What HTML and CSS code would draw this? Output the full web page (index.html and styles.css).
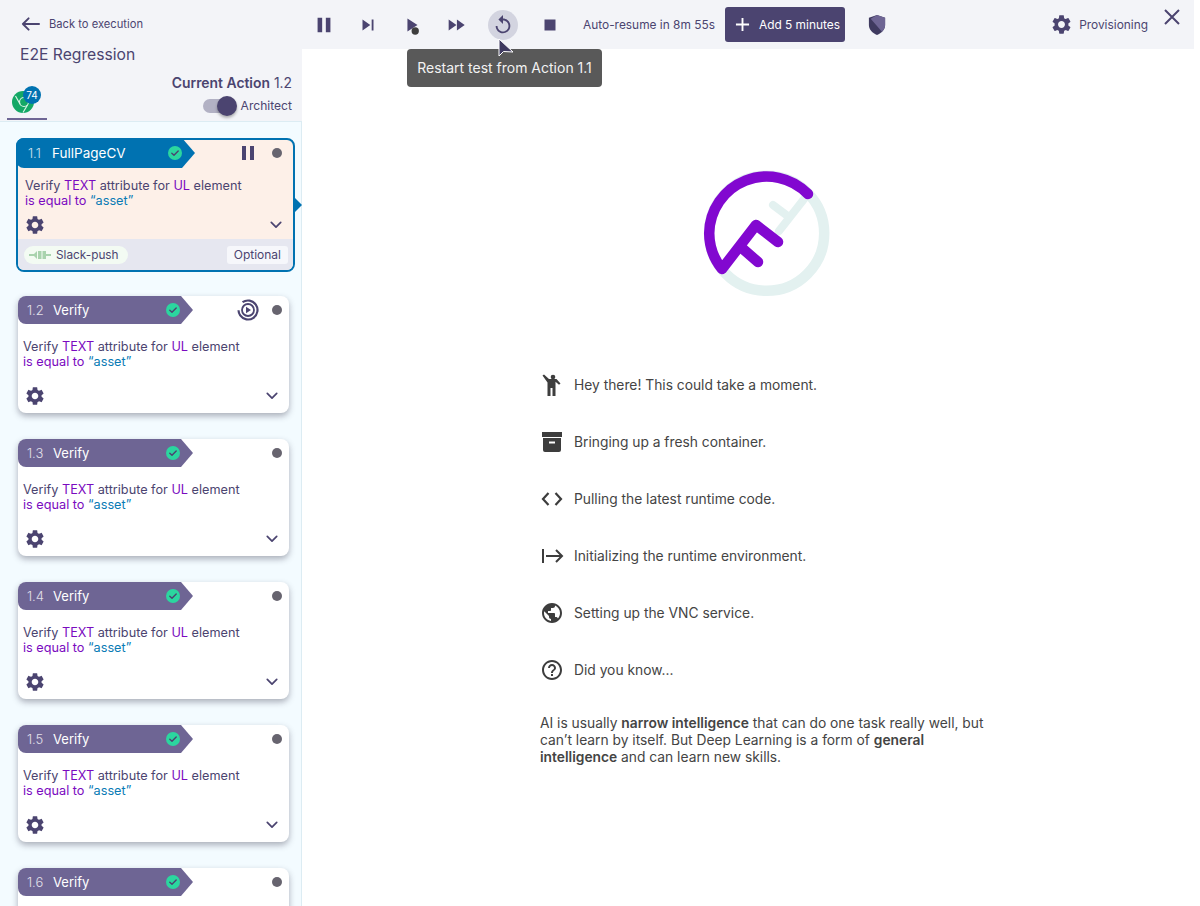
FILE: index.html
```html
<!DOCTYPE html>
<html lang="en">
  <head>
    <meta charset="UTF-8" />
    <meta name="viewport" content="width=device-width, initial-scale=1.0" />
    <title>E2E Regression</title>
    <link rel="stylesheet" href="styles.css">
  </head>
  <body>
    <svg class="sprite" aria-hidden="true">
      <symbol id="gear" viewBox="0 0 24 24"><path d="M19.14 12.94c.04-.3.06-.61.06-.94 0-.32-.02-.64-.07-.94l2.03-1.58c.18-.14.23-.41.12-.61l-1.92-3.32c-.12-.22-.37-.29-.59-.22l-2.39.96c-.5-.38-1.03-.7-1.62-.94l-.36-2.54c-.04-.24-.24-.41-.48-.41h-3.84c-.24 0-.43.17-.47.41l-.36 2.54c-.59.24-1.13.57-1.62.94l-2.39-.96c-.22-.08-.47 0-.59.22L2.74 8.87c-.12.21-.08.47.12.61l2.03 1.58c-.05.3-.09.63-.09.94s.02.64.07.94l-2.03 1.58c-.18.14-.23.41-.12.61l1.92 3.32c.12.22.37.29.59.22l2.39-.96c.5.38 1.03.7 1.62.94l.36 2.54c.05.24.24.41.48.41h3.84c.24 0 .44-.17.47-.41l.36-2.54c.59-.24 1.13-.56 1.62-.94l2.39.96c.22.08.47 0 .59-.22l1.92-3.32c.12-.22.07-.47-.12-.61l-2.01-1.58zM12 15.6c-1.98 0-3.6-1.62-3.6-3.6s1.62-3.6 3.6-3.6 3.6 1.62 3.6 3.6-1.62 3.6-3.6 3.6z"/></symbol>
      <symbol id="chevron" viewBox="0 0 14 9"><path d="M1.5 1.5 7 7l5.5-5.5" fill="none" stroke="currentColor" stroke-width="2" stroke-linecap="round" stroke-linejoin="round"/></symbol>
      <symbol id="check" viewBox="0 0 14 14"><circle cx="7" cy="7" r="7" fill="#2bd69f"/><path d="M3.8 7.2 6 9.3l4.2-4.4" fill="none" stroke="#4b4470" stroke-width="1.4" stroke-linecap="round" stroke-linejoin="round"/></symbol>
    </svg>

    <div class="app">
      <aside class="sidebar">
        <div class="side-head">
          <a class="back">
            <svg class="back-arrow" viewBox="0 0 20 14"><path d="M19 7H2M8 1 2 7l6 6" fill="none" stroke="currentColor" stroke-width="2" stroke-linecap="round" stroke-linejoin="round"/></svg>
            Back to execution
          </a>
          <div class="suite-name">E2E Regression</div>
          <div class="side-tools">
            <div class="browser-tab">
              <svg class="chrome" viewBox="0 0 22 22">
                <circle cx="11" cy="11" r="11" fill="#14a866"/>
                <circle cx="12" cy="11" r="4.5" fill="none" stroke="#d6f2e4" stroke-width="1.2"/>
                <path d="M12 6.5h9M8 13 3.5 5M15.5 14 11 21.5" stroke="#d6f2e4" stroke-width="1.2" fill="none"/>
              </svg>
              <span class="count">74</span>
            </div>
            <div class="current">
              <div class="current-label"><b>Current Action</b> 1.2</div>
              <div class="mode">
                <span class="toggle"><span class="knob"></span></span>
                Architect
              </div>
            </div>
          </div>
        </div>

        <div class="action-list">
          <div class="card card-active">
            <div class="card-top">
              <div class="ribbon"><span class="num">1.1</span><span class="name">FullPageCV</span><svg class="check"><use href="#check"/></svg></div>
              <svg class="state-pause" viewBox="0 0 12 14"><path d="M0 0h4v14H0zM8 0h4v14H8z"/></svg>
              <span class="dot"></span>
            </div>
            <div class="card-text">Verify <em>TEXT</em> attribute for <em>UL</em> element<br><em>is equal to</em> <i>“asset”</i></div>
            <div class="card-foot">
              <svg class="gear"><use href="#gear"/></svg>
              <svg class="chev"><use href="#chevron"/></svg>
            </div>
            <div class="card-extra">
              <span class="plugin">
                <svg viewBox="0 0 22 8"><path d="M0 4h5M17 4h5" stroke="#a9d3ae" stroke-width="2"/><path d="M4 4l4-4v8zM9 0h3.500v8H9zM13.500 0H17v8h-3.500z" fill="#a9d3ae"/></svg>
                Slack-push
              </span>
              <span class="optional">Optional</span>
            </div>
            <span class="pointer"></span>
          </div>

          <div class="card">
            <div class="card-top">
              <div class="ribbon"><span class="num">1.2</span><span class="name">Verify</span><svg class="check"><use href="#check"/></svg></div>
              <svg class="state-run" viewBox="0 0 22 22">
                <circle cx="11" cy="11" r="9.500" fill="none" stroke="#4b4470" stroke-width="2.200" stroke-dasharray="50 10" transform="rotate(-125 11 11)"/>
                <circle cx="11" cy="11" r="6" fill="none" stroke="#4b4470" stroke-width="1.800"/>
                <path d="M9 7.800v6.400l5-3.200z" fill="#4b4470"/>
              </svg>
              <span class="dot"></span>
            </div>
            <div class="card-text">Verify <em>TEXT</em> attribute for <em>UL</em> element<br><em>is equal to</em> <i>“asset”</i></div>
            <div class="card-foot">
              <svg class="gear"><use href="#gear"/></svg>
              <svg class="chev"><use href="#chevron"/></svg>
            </div>
          </div>

          <div class="card">
            <div class="card-top">
              <div class="ribbon"><span class="num">1.3</span><span class="name">Verify</span><svg class="check"><use href="#check"/></svg></div>
              <span class="dot"></span>
            </div>
            <div class="card-text">Verify <em>TEXT</em> attribute for <em>UL</em> element<br><em>is equal to</em> <i>“asset”</i></div>
            <div class="card-foot">
              <svg class="gear"><use href="#gear"/></svg>
              <svg class="chev"><use href="#chevron"/></svg>
            </div>
          </div>

          <div class="card">
            <div class="card-top">
              <div class="ribbon"><span class="num">1.4</span><span class="name">Verify</span><svg class="check"><use href="#check"/></svg></div>
              <span class="dot"></span>
            </div>
            <div class="card-text">Verify <em>TEXT</em> attribute for <em>UL</em> element<br><em>is equal to</em> <i>“asset”</i></div>
            <div class="card-foot">
              <svg class="gear"><use href="#gear"/></svg>
              <svg class="chev"><use href="#chevron"/></svg>
            </div>
          </div>

          <div class="card">
            <div class="card-top">
              <div class="ribbon"><span class="num">1.5</span><span class="name">Verify</span><svg class="check"><use href="#check"/></svg></div>
              <span class="dot"></span>
            </div>
            <div class="card-text">Verify <em>TEXT</em> attribute for <em>UL</em> element<br><em>is equal to</em> <i>“asset”</i></div>
            <div class="card-foot">
              <svg class="gear"><use href="#gear"/></svg>
              <svg class="chev"><use href="#chevron"/></svg>
            </div>
          </div>

          <div class="card">
            <div class="card-top">
              <div class="ribbon"><span class="num">1.6</span><span class="name">Verify</span><svg class="check"><use href="#check"/></svg></div>
              <span class="dot"></span>
            </div>
          </div>
        </div>
      </aside>

      <main class="main">
        <div class="toolbar">
          <div class="controls">
            <button class="tool"><svg viewBox="0 0 24 24"><path d="M5 4h5v16H5zM14 4h5v16h-5z"/></svg></button>
            <button class="tool"><svg viewBox="0 0 24 24"><path d="M6 18l8.500-6L6 6v12zM16 6v12h2V6h-2z"/></svg></button>
            <button class="tool"><svg viewBox="0 0 24 24"><path d="M7 5v14l11-7z"/><circle cx="15.500" cy="18.500" r="4" fill="#3d3d3d"/></svg></button>
            <button class="tool"><svg viewBox="0 0 24 24"><path d="M4 18l8.500-6L4 6v12zm9-12v12l8.500-6L13 6z"/></svg></button>
            <button class="tool tool-on"><svg viewBox="0 0 24 24"><path d="M12 5V1L7 6l5 5V7c3.31 0 6 2.69 6 6s-2.69 6-6 6-6-2.69-6-6H4c0 4.42 3.58 8 8 8s8-3.58 8-8-3.58-8-8-8z"/></svg></button>
            <button class="tool"><svg viewBox="0 0 24 24"><path d="M6 6h12v12H6z"/></svg></button>
          </div>
          <span class="resume">Auto-resume in 8m 55s</span>
          <button class="add-time">
            <svg viewBox="0 0 16 16"><path d="M8 1v14M1 8h14" stroke="#fff" stroke-width="2" fill="none"/></svg>
            Add 5 minutes
          </button>
          <svg class="shield" viewBox="0 0 20 24"><path d="M10 1 1 4v8c0 5 4 9 9 11 5-2 9-6 9-11V4z" fill="#3f3a60"/><path d="M10 1 19 4v8c0 3-1.500 5.500-3.500 7.500L3 5z" fill="#6e6594"/></svg>
          <div class="status">
            <svg class="status-gear"><use href="#gear"/></svg>
            Provisioning
          </div>
          <svg class="close" viewBox="0 0 16 16"><path d="M1 1l14 14M15 1 1 15" stroke="currentColor" stroke-width="2" fill="none"/></svg>
        </div>

        <div class="tooltip">Restart test from Action 1.1</div>
        <svg class="cursor" viewBox="0 0 16 20"><path d="M1 1v17l4.500-4.500L15 14z" fill="#3f3a60" stroke="#fff" stroke-width="1"/></svg>

        <div class="loading">
          <svg class="logo" viewBox="0 0 170 160">
            <g fill="none" stroke-width="10.500" stroke-linecap="round" stroke-linejoin="round">
              <circle cx="86.700" cy="83.300" r="57.500" stroke="#e3f1f0"/>
              <path d="M128 44 99 81M93 55l16 12" stroke="#e3f1f0" stroke-width="8"/>
              <path d="M128 44A57.500 57.500 0 0 0 29.200 83.300 57.500 57.500 0 0 0 42 119L76 75 98 92" stroke="#8208d0"/>
              <path d="M63 99 78 112" stroke="#8208d0"/>
            </g>
          </svg>

          <ul class="steps">
            <li>
              <svg viewBox="0 0 24 24"><circle cx="13" cy="4" r="2.300"/><path d="M2.500 2.500 4 1.500l5 4.500h7.500l4 4.500-1.500 1.300-3.500-3v6.200V23h-3v-8h-2v8H7.500V9.500z"/></svg>
              <span>Hey there! This could take a moment.</span>
            </li>
            <li>
              <svg viewBox="0 0 24 24"><path d="M2 2h20v5H2z"/><path fill-rule="evenodd" d="M3 8h18v12a2 2 0 0 1-2 2H5a2 2 0 0 1-2-2zm6 3.500v2h6v-2z"/></svg>
              <span>Bringing up a fresh container.</span>
            </li>
            <li>
              <svg viewBox="0 0 24 24"><path d="M8.500 6 3 12l5.500 6M15.500 6l5.500 6-5.500 6" fill="none" stroke="#3d3d3d" stroke-width="2.200"/></svg>
              <span>Pulling the latest runtime code.</span>
            </li>
            <li>
              <svg viewBox="0 0 24 24"><path d="M3 5v14M6 12h16M16 6l6 6-6 6" fill="none" stroke="#3d3d3d" stroke-width="2"/></svg>
              <span>Initializing the runtime environment.</span>
            </li>
            <li>
              <svg viewBox="0 0 24 24"><path d="M12 2C6.480 2 2 6.480 2 12s4.480 10 10 10 10-4.480 10-10S17.520 2 12 2zm-1 17.930c-3.950-.49-7-3.850-7-7.930 0-.62.08-1.210.21-1.790L9 15v1c0 1.100.9 2 2 2v1.930zm6.900-2.540c-.26-.81-1-1.390-1.900-1.390h-1v-3c0-.55-.45-1-1-1H8v-2h2c.55 0 1-.45 1-1V7h2c1.100 0 2-.9 2-2v-.41c2.930 1.190 5 4.060 5 7.410 0 2.080-.8 3.970-2.100 5.390z"/></svg>
              <span>Setting up the VNC service.</span>
            </li>
            <li>
              <svg viewBox="0 0 24 24"><path d="M11 18h2v-2h-2v2zm1-16C6.480 2 2 6.480 2 12s4.480 10 10 10 10-4.480 10-10S17.520 2 12 2zm0 18c-4.410 0-8-3.590-8-8s3.590-8 8-8 8 3.590 8 8-3.590 8-8 8zm0-14c-2.210 0-4 1.790-4 4h2c0-1.100.9-2 2-2s2 .9 2 2c0 2-3 1.750-3 5h2c0-2.250 3-2.500 3-5 0-2.210-1.790-4-4-4z"/></svg>
              <span>Did you know...</span>
            </li>
          </ul>

          <p class="fact">AI is usually <b>narrow intelligence</b> that can do one task really well, but can’t learn by itself. But Deep Learning is a form of <b>general intelligence</b> and can learn new skills.</p>
        </div>
      </main>
    </div>
  </body>
</html>
```

FILE: styles.css
```css
* {
  box-sizing: border-box;
}
html,
body {
  height: 906px;
  margin: 0;
  overflow: hidden;
}
body {
  background-color: #fff;
  font-family: Inter, "Liberation Sans", sans-serif;
  color: #4b4470;
}
.sprite {
  display: none;
}
.app {
  display: flex;
  width: 1194px;
  height: 906px;
  overflow: hidden;
}

/* sidebar */
.sidebar {
  width: 302px;
  flex: none;
  display: flex;
  flex-direction: column;
  background: #f3f4f8;
}
.side-head {
  height: 121px;
  flex: none;
  padding-top: 17px;
}
.back {
  display: flex;
  align-items: center;
  gap: 9px;
  padding-left: 21px;
  height: 14px;
  font-size: 11.200px;
}
.back-arrow {
  width: 19px;
  height: 14px;
}
.suite-name {
  margin: 15px 0 0 20px;
  font-size: 15.700px;
  line-height: 18px;
}
.side-tools {
  display: flex;
  justify-content: space-between;
  margin-top: 11px;
  padding: 0 10px 0 7px;
}
.browser-tab {
  position: relative;
  width: 40px;
  height: 45px;
  border-bottom: 2px solid #6e6594;
}
.chrome {
  position: absolute;
  left: 5px;
  top: 16px;
  width: 22px;
  height: 22px;
}
.count {
  position: absolute;
  left: 16px;
  top: 11px;
  width: 18px;
  height: 18px;
  border-radius: 50%;
  background: #0072b1;
  color: #fff;
  font-size: 10px;
  line-height: 18px;
  text-align: center;
}
.current {
  display: flex;
  flex-direction: column;
  align-items: flex-end;
}
.current-label {
  font-size: 13.900px;
  line-height: 16px;
}
.current-label b {
  font-weight: 600;
}
.mode {
  display: flex;
  align-items: center;
  gap: 6px;
  margin-top: 5px;
  font-size: 12.100px;
  line-height: 20px;
}
.toggle {
  position: relative;
  width: 32px;
  height: 14px;
  border-radius: 7px;
  background: #b2b1c4;
}
.knob {
  position: absolute;
  right: -2px;
  top: -3px;
  width: 20px;
  height: 20px;
  border-radius: 50%;
  background: #4b4470;
  box-shadow: 0 2px 3px rgba(0, 0, 0, 0.3);
}

/* action cards */
.action-list {
  flex: 1;
  min-height: 0;
  display: flex;
  flex-direction: column;
  gap: 26px;
  padding: 16px 12px 0 18px;
  background: #f3fbff;
  border-top: 1px solid #dcecf3;
  border-right: 1px solid #dcecf3;
}
.card {
  position: relative;
  flex: none;
  height: 117px;
  display: flex;
  flex-direction: column;
  background: #fff;
  border-radius: 8px;
  box-shadow: 0 3px 6px rgba(60, 60, 80, 0.4);
}
.card-top {
  height: 28px;
  flex: none;
  display: flex;
  align-items: center;
  padding-right: 7px;
}
.ribbon {
  width: 175px;
  height: 28px;
  display: flex;
  align-items: center;
  margin-right: auto;
  padding-left: 9px;
  background: #6e6594;
  color: #fff;
  font-size: 13px;
  border-radius: 8px 0 0 8px;
  clip-path: polygon(0 0, 163px 0, 100% 50%, 163px 100%, 0 100%);
}
.num {
  width: 26px;
  opacity: 0.8;
  font-weight: 300;
}
.name {
  flex: 1;
}
.check {
  width: 14px;
  height: 14px;
  margin-right: 13px;
}
.dot {
  width: 10px;
  height: 10px;
  border-radius: 50%;
  background: #67646f;
}
.state-run {
  width: 22px;
  height: 22px;
  margin-right: 13px;
}
.state-pause {
  width: 12px;
  height: 14px;
  margin-right: 18px;
  fill: #4b4470;
}
.card-text {
  margin-top: 15px;
  padding: 0 5px;
  font-size: 12.700px;
  line-height: 15px;
  color: #4b4470;
}
.card-text em {
  font-style: normal;
  color: #7a0bc0;
}
.card-text i {
  font-style: normal;
  color: #0a7bb5;
}
.card-foot {
  display: flex;
  justify-content: space-between;
  align-items: center;
  margin-top: 16px;
  padding: 0 11px 0 6px;
}
.gear {
  width: 22px;
  height: 22px;
  fill: #4b4470;
}
.chev {
  width: 12px;
  height: 8px;
  color: #4b4470;
}

/* selected card */
.card-active {
  height: 134px;
  margin: 0 -6px -2px -2px;
  background: #fdf0e8;
  border: 2px solid #0072b1;
  box-shadow: none;
}
.card-active .card-top {
  height: 30px;
  margin: -2px 0 0 -2px;
  padding-right: 11px;
}
.card-active .ribbon {
  width: 179px;
  height: 30px;
  padding-left: 12px;
  background: #0072b1;
  font-size: 13.500px;
  clip-path: polygon(0 0, 166px 0, 100% 50%, 166px 100%, 0 100%);
}
.card-active .num {
  width: 24px;
  font-size: 13px;
}
.card-active .card-text {
  margin-top: 10px;
  padding: 0 7px;
}
.card-active .card-foot {
  margin-top: 5px;
  padding: 0 11px 0 6px;
  height: 24px;
}
.card-extra {
  display: flex;
  justify-content: space-between;
  align-items: center;
  flex: 1;
  margin-top: 2px;
  padding: 0 5px 0 6px;
  background: #e6e7f0;
  border-radius: 0 0 6px 6px;
}
.plugin {
  display: flex;
  align-items: center;
  gap: 5px;
  height: 18px;
  padding: 0 9px 0 5px;
  border-radius: 9px;
  background: #f3fbf3;
  font-size: 11.800px;
}
.plugin svg {
  width: 22px;
  height: 8px;
}
.optional {
  height: 18px;
  padding: 0 7px;
  border-radius: 3px;
  background: #f6f7fb;
  font-size: 12px;
  line-height: 18px;
}
.pointer {
  position: absolute;
  right: -9px;
  top: 58px;
  border-left: 7px solid #0072b1;
  border-top: 7px solid transparent;
  border-bottom: 7px solid transparent;
}

/* main column */
.main {
  position: relative;
  flex: 1;
  min-width: 0;
}
.toolbar {
  height: 49px;
  display: flex;
  align-items: center;
  background: #f3f4f8;
  padding-left: 7px;
}
.controls {
  display: flex;
  align-items: center;
}
.tool {
  width: 30px;
  height: 30px;
  margin-right: 14px;
  padding: 4px;
  border: none;
  border-radius: 50%;
  background: none;
}
.tool svg {
  display: block;
  width: 22px;
  height: 22px;
  fill: #4b4470;
}
.tool-on {
  margin-left: 3px;
  margin-right: 17px;
  background: #d3d4e0;
}
.resume {
  margin-left: 4px;
  font-size: 11.900px;
  white-space: nowrap;
}
.add-time {
  display: flex;
  align-items: center;
  gap: 9px;
  width: 120px;
  height: 35px;
  margin-left: 10px;
  padding: 0 0 0 10px;
  border: none;
  border-radius: 3px;
  background: #4b4470;
  color: #fff;
  font-family: inherit;
  font-size: 11.900px;
  white-space: nowrap;
}
.add-time svg {
  width: 15px;
  height: 15px;
}
.shield {
  width: 18px;
  height: 22px;
  margin-left: 23px;
}
.status {
  display: flex;
  align-items: center;
  gap: 6px;
  margin-left: auto;
  margin-right: 46px;
  font-size: 11.900px;
}
.status-gear {
  width: 23px;
  height: 23px;
  fill: #4b4470;
}
.close {
  position: absolute;
  right: 14px;
  top: 9px;
  width: 16px;
  height: 16px;
  color: #4b4470;
}
.tooltip {
  position: absolute;
  left: 105px;
  top: 49px;
  width: 195px;
  height: 38px;
  border-radius: 4px;
  background: #595959;
  color: #f2f2f2;
  font-size: 14px;
  line-height: 38px;
  text-align: center;
}
.cursor {
  position: absolute;
  left: 196px;
  top: 38px;
  width: 16px;
  height: 20px;
}

/* loading panel */
.loading {
  padding-left: 238px;
  color: #444;
}
.logo {
  display: block;
  width: 170px;
  height: 160px;
  margin: 101px 0 0 140px;
}
.steps {
  list-style: none;
  margin: 46px 0 0;
  padding: 0;
}
.steps li {
  display: flex;
  align-items: center;
  gap: 10px;
  height: 57px;
  font-size: 13.800px;
}
.steps svg {
  width: 24px;
  height: 24px;
  fill: #3d3d3d;
}
.fact {
  width: 460px;
  margin: 17px 0 0;
  font-size: 13.800px;
  line-height: 17px;
}
.fact b {
  font-weight: 600;
}
```
